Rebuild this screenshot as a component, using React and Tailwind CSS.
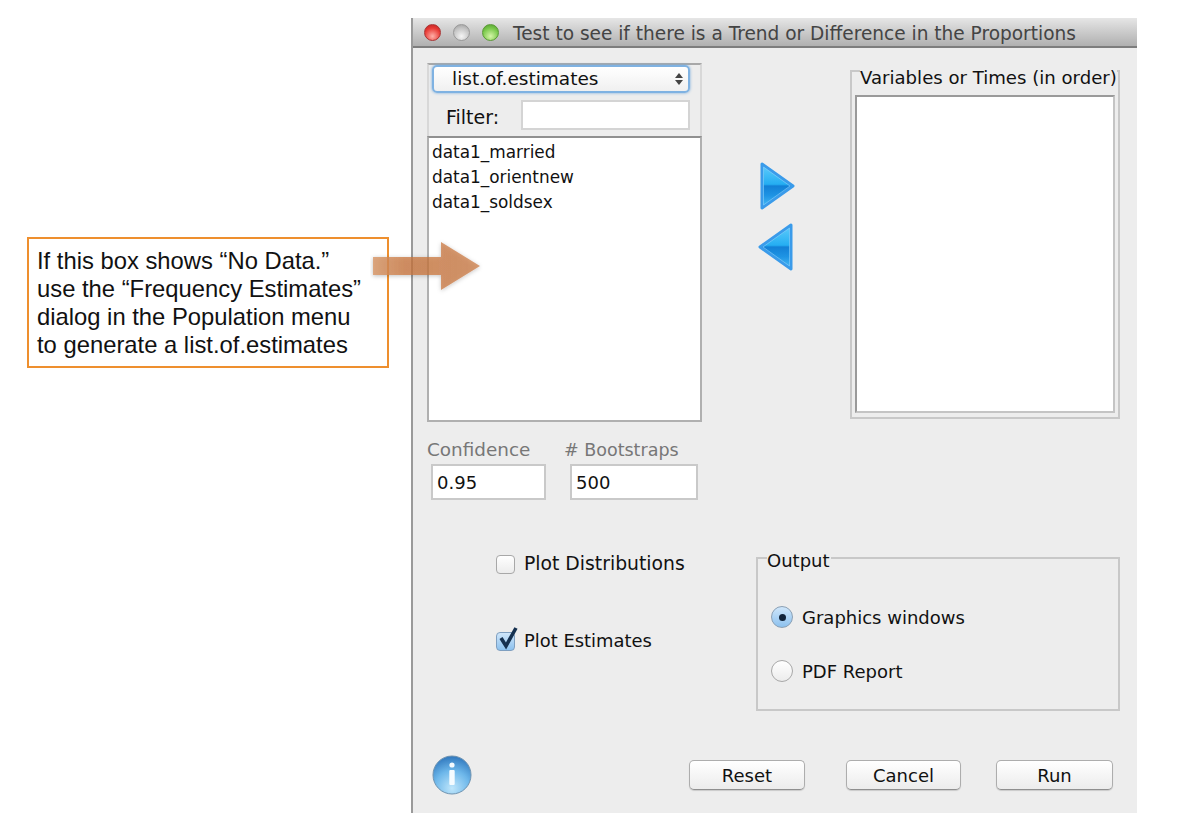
import { useId } from "react";

const uiFont = "font-['DejaVu_Sans',sans-serif]";

function Lights() {
  return (
    <div className="flex items-center gap-[12px]">
      <span className="w-[17px] h-[17px] rounded-full border border-[#a33] bg-[radial-gradient(circle_at_50%_75%,#ffb0a8,#e83a35_60%,#b81f1f)]" />
      <span className="w-[17px] h-[17px] rounded-full border border-[#999] bg-[radial-gradient(circle_at_50%_75%,#f5f5f5,#c4c4c4_60%,#9a9a9a)]" />
      <span className="w-[17px] h-[17px] rounded-full border border-[#5a9a35] bg-[radial-gradient(circle_at_50%_75%,#d5f5a8,#79c84a_60%,#4f9a2c)]" />
    </div>
  );
}

function Arrow({ left }) {
  const id = useId();
  return (
    <svg width="37" height="48" viewBox="0 0 37 48" className={left ? "-scale-x-100 -ml-[2px]" : ""}>
      <defs>
        <linearGradient id={id} x1="0" y1="0" x2="0" y2="1">
          <stop offset="0" stopColor="#62cdfb" />
          <stop offset="0.46" stopColor="#25aef2" />
          <stop offset="0.5" stopColor="#1280d6" />
          <stop offset="0.72" stopColor="#1e94e4" />
          <stop offset="1" stopColor="#4cc0f8" />
        </linearGradient>
      </defs>
      <path d="M3 2 L34 24 L3 46 Z" fill={`url(#${id})`} stroke="#3a9bea" strokeWidth="3" strokeLinejoin="round" />
      <path d="M4.5 5 L31 24 L4.5 43 Z" fill="none" stroke="#8fd6fb" strokeOpacity="0.55" strokeWidth="1" />
    </svg>
  );
}

function Field({ value, className }) {
  return (
    <div className={`h-[36px] bg-white border-2 border-[#c9c9c9] pl-[4px] flex items-center text-[18px] text-[#111] ${className}`}>
      {value}
    </div>
  );
}

function PushButton({ label, className }) {
  return (
    <button className={`h-[30px] rounded-[5px] border border-[#adadad] border-b-[#8f8f8f] bg-linear-to-b from-white to-[#ececec] shadow-[0_1px_1px_rgba(0,0,0,0.15)] text-[18px] text-[#111] ${className}`}>
      {label}
    </button>
  );
}

function InfoIcon() {
  const id = useId();
  return (
    <svg width="40" height="40" viewBox="0 0 40 40">
      <defs>
        <radialGradient id={id} cx="0.5" cy="0.85" r="0.85">
          <stop offset="0" stopColor="#bfe6fb" />
          <stop offset="0.55" stopColor="#6db7ea" />
          <stop offset="1" stopColor="#2f77bd" />
        </radialGradient>
      </defs>
      <circle cx="20" cy="20" r="19" fill={`url(#${id})`} stroke="#6f93b0" strokeWidth="1" />
      <circle cx="20" cy="10" r="2.6" fill="#f4fbff" />
      <rect x="17.3" y="15" width="5.4" height="15" rx="1" fill="#f4fbff" />
    </svg>
  );
}

export default function App() {
  return (
    <div className="relative w-[1182px] h-[836px] bg-white overflow-hidden flex items-start">
      {/* callout on the left */}
      <div className="w-[362px] h-[131px] mt-[237px] ml-[27px] shrink-0 border-2 border-[#ee8f2e] pl-[8px] pt-[8px] font-['Liberation_Sans',sans-serif] text-[23.8px] leading-[28px] text-[#111] whitespace-nowrap">
        <p>If this box shows “No Data.”</p>
        <p>use the “Frequency Estimates”</p>
        <p>dialog in the Population menu</p>
        <p>to generate a list.of.estimates</p>
      </div>

      {/* dialog */}
      <div className={`w-[726px] h-[795px] mt-[18px] ml-[22px] shrink-0 bg-[#ededed] border-l-2 border-[#9a9a9a] ${uiFont}`}>
        <div className="h-[30px] flex items-center pl-[11px] gap-[14px] bg-linear-to-b from-[#e6e6e6] to-[#b0b0b0] border-b-2 border-[#7d7d7d]">
          <Lights />
          <span className="pt-[3px] text-[18.55px] text-[#444] whitespace-nowrap">Test to see if there is a Trend or Difference in the Proportions</span>
        </div>

        <div className="flex pl-[14px] pt-[15px]">
          {/* left column */}
          <div className="w-[275px] shrink-0">
            <div className="h-[73px] border-t-2 border-x-2 border-x-[#d8d8d8] border-t-[#a8a8a8] pl-[3px] pr-[10px]">
              <div className="h-[28px] rounded-[5px] border-2 border-[#7fb2e2] shadow-[0_0_3px_#74a9dc] bg-linear-to-b from-white to-[#f0f0f0] flex items-center pl-[18px] pr-[5px] pb-[1px] text-[18.5px] text-[#111]">
                <span className="flex-1">list.of.estimates</span>
                <span className="flex flex-col gap-[2px]">
                  <span className="w-0 h-0 border-x-[4px] border-x-transparent border-b-[5px] border-b-[#444]" />
                  <span className="w-0 h-0 border-x-[4px] border-x-transparent border-t-[5px] border-t-[#444]" />
                </span>
              </div>
              <div className="flex items-center mt-[7px] pl-[14px] text-[19px] leading-[20px] text-[#111]">
                <span className="w-[75px] pt-[4px]">Filter:</span>
                <div className="w-[169px] h-[30px] bg-white border-2 border-[#d4d4d4]" />
              </div>
            </div>
            <div className="h-[286px] bg-white border-2 border-[#b0b0b0] border-t-[#909090] pl-[3px] pt-[2px] text-[16.9px] leading-[25px] text-[#111]">
              <p>data1_married</p>
              <p>data1_orientnew</p>
              <p>data1_soldsex</p>
            </div>
            <div className="flex mt-[16px] text-[#777] leading-[24px]">
              <span className="w-[137px] text-[18.4px]">Confidence</span>
              <span className="text-[17.5px]"># Bootstraps</span>
            </div>
            <div className="flex mt-[2px] pl-[4px] gap-[24px]">
              <Field value="0.95" className="w-[115px]" />
              <Field value="500" className="w-[128px]" />
            </div>
          </div>

          {/* transfer arrows */}
          <div className="w-[148px] shrink-0 flex flex-col gap-[13px] pl-[57px] pt-[99px]">
            <Arrow />
            <Arrow left />
          </div>

          {/* variables box */}
          <div className="relative w-[270px] h-[349px] mt-[7px] border-2 border-[#c8c8c8] p-[3px] pt-[23px] pb-[4px]">
            <span className="absolute left-[8px] -top-[6px] bg-[#ededed] text-[18.1px] leading-[24px] text-[#111] whitespace-nowrap">Variables or Times (in order)</span>
            <div className="h-full bg-white border-2 border-[#9a9a9a] border-b-[#c4c4c4] border-r-[#c4c4c4]" />
          </div>
        </div>

        {/* options */}
        <div className="flex mt-[57px]">
          <div className="w-[343px] shrink-0 pl-[83px] text-[17.9px] text-[#111]">
            <label className="flex items-center gap-[9px] h-[24px] -mt-[5px] text-[18.8px]">
              <span className="w-[19px] h-[19px] rounded-[4px] border border-[#a8a8a8] bg-linear-to-b from-white to-[#ececec]" />
              Plot Distributions
            </label>
            <label className="relative flex items-center gap-[9px] h-[24px] mt-[53px]">
              <span className="w-[19px] h-[19px] rounded-[4px] border border-[#7f9fc0] bg-linear-to-b from-[#cfe6fa] to-[#8cc1ee]" />
              <svg className="absolute left-0 -top-[4px]" width="24" height="26" viewBox="0 0 24 26">
                <path d="M5 13 L10 21 L20 3" fill="none" stroke="#15304f" strokeWidth="3.6" />
              </svg>
              Plot Estimates
            </label>
          </div>
          <div className="relative w-[364px] h-[154px] border-2 border-[#c8c8c8] pl-[13px] pt-[46px] text-[18px] text-[#111]">
            <span className="absolute left-[9px] -top-[10px] bg-[#ededed] pr-[1px] leading-[24px]">Output</span>
            <label className="flex items-center gap-[9px] h-[24px]">
              <span className="w-[22px] h-[22px] rounded-full border border-[#8aa0b5] bg-linear-to-b from-[#cfe6fa] to-[#8cc1ee] flex items-center justify-center">
                <span className="w-[7px] h-[7px] rounded-full bg-[#10233a]" />
              </span>
              Graphics windows
            </label>
            <label className="flex items-center gap-[9px] h-[24px] mt-[30px]">
              <span className="w-[22px] h-[22px] rounded-full border border-[#a8a8a8] bg-linear-to-b from-white to-[#ececec]" />
              PDF Report
            </label>
          </div>
        </div>

        {/* footer */}
        <div className="flex items-center mt-[44px] pl-[19px]">
          <InfoIcon />
          <PushButton label="Reset" className="w-[116px] ml-[217px]" />
          <PushButton label="Cancel" className="w-[115px] ml-[41px]" />
          <PushButton label="Run" className="w-[117px] ml-[35px]" />
        </div>
      </div>

      {/* annotation arrow lying over both */}
      <svg className="absolute left-[370px] top-[238px]" width="120" height="60" viewBox="0 0 120 60">
        <defs>
          <linearGradient id="arrowFill" x1="0" y1="0" x2="1" y2="0">
            <stop offset="0" stopColor="#d89a6c" stopOpacity="0.85" />
            <stop offset="0.3" stopColor="#c8743c" stopOpacity="0.75" />
            <stop offset="1" stopColor="#c8743c" stopOpacity="0.7" />
          </linearGradient>
          <filter id="arrowShadow" x="-20%" y="-30%" width="140%" height="160%">
            <feDropShadow dx="0" dy="1" stdDeviation="2" floodColor="#000" floodOpacity="0.3" />
          </filter>
        </defs>
        <path d="M3 19 H71 V4 L110 28 L71 52 V37 H3 Z" fill="url(#arrowFill)" filter="url(#arrowShadow)" />
      </svg>
    </div>
  );
}
